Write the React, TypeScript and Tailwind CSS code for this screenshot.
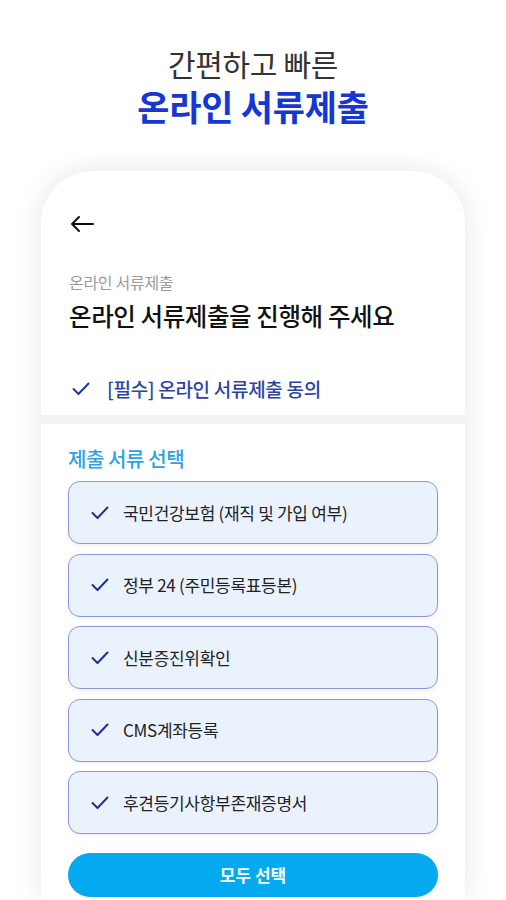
import React from "react";

const font = { fontFamily: '"Noto Sans CJK KR", "Noto Sans", sans-serif' };

function Check({ className = "" }: { className?: string }) {
  return (
    <svg width="18" height="14" viewBox="0 0 18 14" fill="none" className={className}>
      <path d="M1.5 7 L6.5 12 L16.5 1.5" stroke="currentColor" strokeWidth="2" strokeLinecap="round" strokeLinejoin="round" />
    </svg>
  );
}

const items = [
  "국민건강보험 (재직 및 가입 여부)",
  "정부 24 (주민등록표등본)",
  "신분증진위확인",
  "CMS계좌등록",
  "후견등기사항부존재증명서",
];

export default function App() {
  return (
    <div className="w-[506px] h-[900px] bg-white overflow-hidden flex flex-col items-center" style={font}>
      <div className="pt-[46px] flex flex-col items-center">
        <div className="text-[30px] leading-[34px] text-[#333333] tracking-[-0.3px]">간편하고 빠른</div>
        <div className="mt-[6px] text-[35px] leading-[40px] font-semibold text-[#1637d4] tracking-[-0.2px]">온라인 서류제출</div>
      </div>
      <div className="mt-[45px] w-[424px] flex-1 bg-white rounded-t-[52px] shadow-[0_0_28px_rgba(0,0,0,0.10)] flex flex-col">
        <div className="px-[28px] pt-[43px]">
          <svg width="26" height="20" viewBox="0 0 26 20" fill="none" className="text-[#111] block">
            <path d="M24 10 H3 M10 3 L3 10 L10 17" stroke="currentColor" strokeWidth="2" strokeLinecap="round" strokeLinejoin="round" />
          </svg>
          <div className="mt-[37px] text-[16px] leading-[22px] text-[#9a9a9a] tracking-[-0.3px]">온라인 서류제출</div>
          <div className="mt-[7px] text-[24.5px] leading-[32px] text-[#111] font-medium tracking-[-0.4px]">온라인 서류제출을 진행해 주세요</div>
          <div className="mt-[44px] flex items-center h-[26px]">
            <Check className="text-[#1d3a9c] ml-[3px]" />
            <span className="ml-[17px] text-[19px] leading-[26px] text-[#2a44a6] font-medium tracking-[-0.3px]">[필수] 온라인 서류제출 동의</span>
          </div>
        </div>
        <div className="mt-[13px] h-[9px] bg-[#f2f2f2]" />
        <div className="px-[27px] pt-[21px]">
          <div className="text-[20px] leading-[28px] text-[#2aa3e6] font-medium tracking-[-0.4px]">제출 서류 선택</div>
          <div className="mt-[8px] flex flex-col gap-[9.5px]">
            {items.map((t) => (
              <div key={t} className="h-[63px] rounded-[12px] border-[1.5px] border-[#8d96d8] bg-[#eaf3fd] flex items-center px-[22px] shadow-[0_2px_4px_rgba(0,0,0,0.06)]">
                <Check className="text-[#1f2f9e]" />
                <span className="ml-[14px] text-[17px] text-[#222] tracking-[-0.3px]">{t}</span>
              </div>
            ))}
          </div>
          <div className="mt-[19px] h-[44px] rounded-full bg-[#05a9f0] flex items-center justify-center text-white text-[17px] font-bold">모두 선택</div>
        </div>
      </div>
    </div>
  );
}
